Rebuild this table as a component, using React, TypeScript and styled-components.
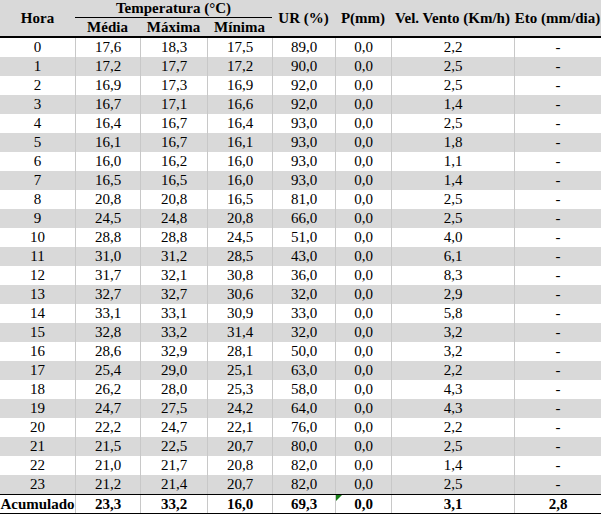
import React from "react";
import styled, { createGlobalStyle } from "styled-components";

const GlobalStyle = createGlobalStyle`
  html, body { margin: 0; padding: 0; background: #ffffff; }
  body { font-family: "Liberation Serif", "Times New Roman", serif; color: #000; }
`;

const COLS = "75px 65px 67px 65px 63px 56px 123px 87px";

const Table = styled.div`
  width: 601px;
  font-family: "Liberation Serif", "Times New Roman", serif;
  font-size: 15px;
  color: #000;
`;

const Header = styled.div`
  display: grid;
  grid-template-columns: ${COLS};
  grid-template-rows: 18px 18px;
  background: #d9d9d9;
  border-bottom: 2px solid #000;
  font-weight: bold;
`;

const HeadCell = styled.div<{ $col: string; $row: string; $underline?: boolean }>`
  grid-column: ${(p) => p.$col};
  grid-row: ${(p) => p.$row};
  display: flex;
  align-items: center;
  justify-content: center;
  white-space: nowrap;
  line-height: 1;
  box-sizing: border-box;
  ${(p) => (p.$underline ? "border-bottom: 1px solid #000;" : "")}
`;

const Row = styled.div<{ $shaded?: boolean; $total?: boolean }>`
  display: grid;
  grid-template-columns: ${COLS};
  height: ${(p) => (p.$total ? "18px" : "19px")};
  background: ${(p) => (p.$shaded ? "#d9d9d9" : "#ffffff")};
  font-weight: ${(p) => (p.$total ? "bold" : "normal")};
  ${(p) =>
    p.$total ? "border-top: 1px solid #000; border-bottom: 2px solid #000;" : ""}
`;

const Cell = styled.div<{ $first?: boolean }>`
  position: relative;
  display: flex;
  align-items: center;
  justify-content: center;
  box-sizing: border-box;
  border-left: ${(p) => (p.$first ? "none" : "1px solid #c8c8c8")};
  white-space: nowrap;
  line-height: 1;
`;

const ErrorMark = styled.span`
  position: absolute;
  top: 0;
  left: 0;
  width: 0;
  height: 0;
  border-top: 6px solid #1a7f1a;
  border-right: 6px solid transparent;
`;

const data: string[][] = [
  ["17,6", "18,3", "17,5", "89,0", "0,0", "2,2", "-"],
  ["17,2", "17,7", "17,2", "90,0", "0,0", "2,5", "-"],
  ["16,9", "17,3", "16,9", "92,0", "0,0", "2,5", "-"],
  ["16,7", "17,1", "16,6", "92,0", "0,0", "1,4", "-"],
  ["16,4", "16,7", "16,4", "93,0", "0,0", "2,5", "-"],
  ["16,1", "16,7", "16,1", "93,0", "0,0", "1,8", "-"],
  ["16,0", "16,2", "16,0", "93,0", "0,0", "1,1", "-"],
  ["16,5", "16,5", "16,0", "93,0", "0,0", "1,4", "-"],
  ["20,8", "20,8", "16,5", "81,0", "0,0", "2,5", "-"],
  ["24,5", "24,8", "20,8", "66,0", "0,0", "2,5", "-"],
  ["28,8", "28,8", "24,5", "51,0", "0,0", "4,0", "-"],
  ["31,0", "31,2", "28,5", "43,0", "0,0", "6,1", "-"],
  ["31,7", "32,1", "30,8", "36,0", "0,0", "8,3", "-"],
  ["32,7", "32,7", "30,6", "32,0", "0,0", "2,9", "-"],
  ["33,1", "33,1", "30,9", "33,0", "0,0", "5,8", "-"],
  ["32,8", "33,2", "31,4", "32,0", "0,0", "3,2", "-"],
  ["28,6", "32,9", "28,1", "50,0", "0,0", "3,2", "-"],
  ["25,4", "29,0", "25,1", "63,0", "0,0", "2,2", "-"],
  ["26,2", "28,0", "25,3", "58,0", "0,0", "4,3", "-"],
  ["24,7", "27,5", "24,2", "64,0", "0,0", "4,3", "-"],
  ["22,2", "24,7", "22,1", "76,0", "0,0", "2,2", "-"],
  ["21,5", "22,5", "20,7", "80,0", "0,0", "2,5", "-"],
  ["21,0", "21,7", "20,8", "82,0", "0,0", "1,4", "-"],
  ["21,2", "21,4", "20,7", "82,0", "0,0", "2,5", "-"],
];

const totals = ["23,3", "33,2", "16,0", "69,3", "0,0", "3,1", "2,8"];

export default function App() {
  return (
    <>
      <GlobalStyle />
      <Table>
        <Header>
          <HeadCell $col="1" $row="1 / span 2">Hora</HeadCell>
          <HeadCell $col="2 / span 3" $row="1" $underline>
            Temperatura (°C)
          </HeadCell>
          <HeadCell $col="2" $row="2">Média</HeadCell>
          <HeadCell $col="3" $row="2">Máxima</HeadCell>
          <HeadCell $col="4" $row="2">Mínima</HeadCell>
          <HeadCell $col="5" $row="1 / span 2">UR (%)</HeadCell>
          <HeadCell $col="6" $row="1 / span 2">P(mm)</HeadCell>
          <HeadCell $col="7" $row="1 / span 2">Vel. Vento (Km/h)</HeadCell>
          <HeadCell $col="8" $row="1 / span 2">Eto (mm/dia)</HeadCell>
        </Header>
        {data.map((r, i) => (
          <Row key={i} $shaded={i % 2 === 1}>
            <Cell $first>{i}</Cell>
            {r.map((v, j) => (
              <Cell key={j}>{v}</Cell>
            ))}
          </Row>
        ))}
        <Row $total>
          <Cell $first>Acumulado</Cell>
          {totals.map((v, j) => (
            <Cell key={j}>
              {j === 4 && <ErrorMark />}
              {v}
            </Cell>
          ))}
        </Row>
      </Table>
    </>
  );
}
